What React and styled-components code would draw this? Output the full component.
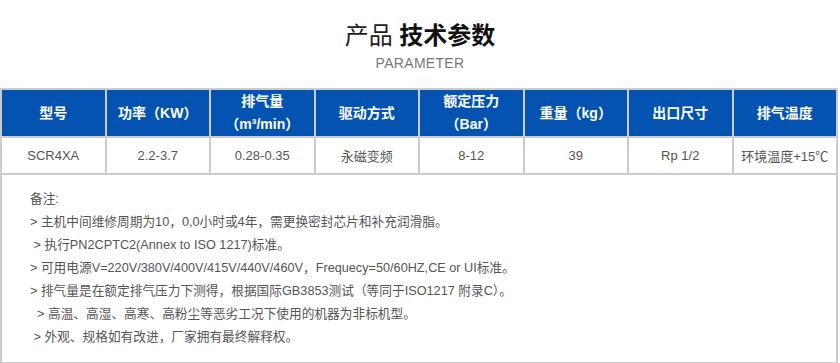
import React from 'react';
import styled, { createGlobalStyle } from 'styled-components';

const GlobalStyle = createGlobalStyle`
  body {
    margin: 0;
    background: #fff;
    font-family: "Liberation Sans", Arial, "Noto Sans CJK SC", sans-serif;
  }
`;

const Page = styled.div`
  width: 840px;
`;

const Heading = styled.div`
  text-align: center;
  padding-top: 20px;
  height: 88px;
  box-sizing: border-box;
`;

const Title = styled.h2`
  margin: 0;
  font-size: 24px;
  line-height: 32px;
  font-weight: normal;
  color: #222;
  b {
    font-weight: bold;
    color: #111;
  }
`;

const SubTitle = styled.div`
  margin-top: 3px;
  font-size: 14px;
  line-height: 16px;
  color: #777;
  letter-spacing: 0.3px;
`;

const Table = styled.table`
  width: 838px;
  border-collapse: collapse;
  table-layout: fixed;
  border: 2px solid #ccc;
  border-bottom: none;
`;

const HeadCell = styled.th`
  background: #0453b0;
  color: #fff;
  font-size: 14px;
  font-weight: bold;
  height: 46px;
  line-height: 23px;
  padding: 0;
  border: 2px solid #ccc;
  border-top: none;
  text-align: center;
`;

const Cell = styled.td`
  color: #555;
  font-size: 13px;
  height: 35px;
  padding: 0;
  border: 2px solid #ccc;
  text-align: center;
`;

const Notes = styled.div`
  width: 838px;
  box-sizing: border-box;
  border: 2px solid #ccc;
  border-top: none;
  padding: 13px 0 0 28px;
  height: 189px;
  color: #555;
  font-size: 12.7px;
  line-height: 23px;
`;

const Line = styled.div`
  white-space: pre;
`;

const heads = [
  ['型号'],
  ['功率（KW）'],
  ['排气量', '（m³/min）'],
  ['驱动方式'],
  ['额定压力', '（Bar）'],
  ['重量（kg）'],
  ['出口尺寸'],
  ['排气温度'],
];

const values = ['SCR4XA', '2.2-3.7', '0.28-0.35', '永磁变频', '8-12', '39', 'Rp 1/2', '环境温度+15℃'];

const notes = [
  '备注:',
  '> 主机中间维修周期为10，0,0小时或4年，需更换密封芯片和补充润滑脂。',
  ' > 执行PN2CPTC2(Annex to ISO 1217)标准。',
  '> 可用电源V=220V/380V/400V/415V/440V/460V，Frequecy=50/60HZ,CE or UI标准。',
  '> 排气量是在额定排气压力下测得，根据国际GB3853测试（等同于ISO1217 附录C）。',
  '  > 高温、高湿、高寒、高粉尘等恶劣工况下使用的机器为非标机型。',
  ' > 外观、规格如有改进，厂家拥有最终解释权。',
];

export default function App() {
  return (
    <Page>
      <GlobalStyle />
      <Heading>
        <Title>产品 <b>技术参数</b></Title>
        <SubTitle>PARAMETER</SubTitle>
      </Heading>
      <Table>
        <thead>
          <tr>
            {heads.map((h, i) => (
              <HeadCell key={i}>
                {h.map((t, j) => (
                  <div key={j}>{t}</div>
                ))}
              </HeadCell>
            ))}
          </tr>
        </thead>
        <tbody>
          <tr>
            {values.map((v, i) => (
              <Cell key={i}>{v}</Cell>
            ))}
          </tr>
        </tbody>
      </Table>
      <Notes>
        {notes.map((n, i) => (
          <Line key={i}>{n}</Line>
        ))}
      </Notes>
    </Page>
  );
}
